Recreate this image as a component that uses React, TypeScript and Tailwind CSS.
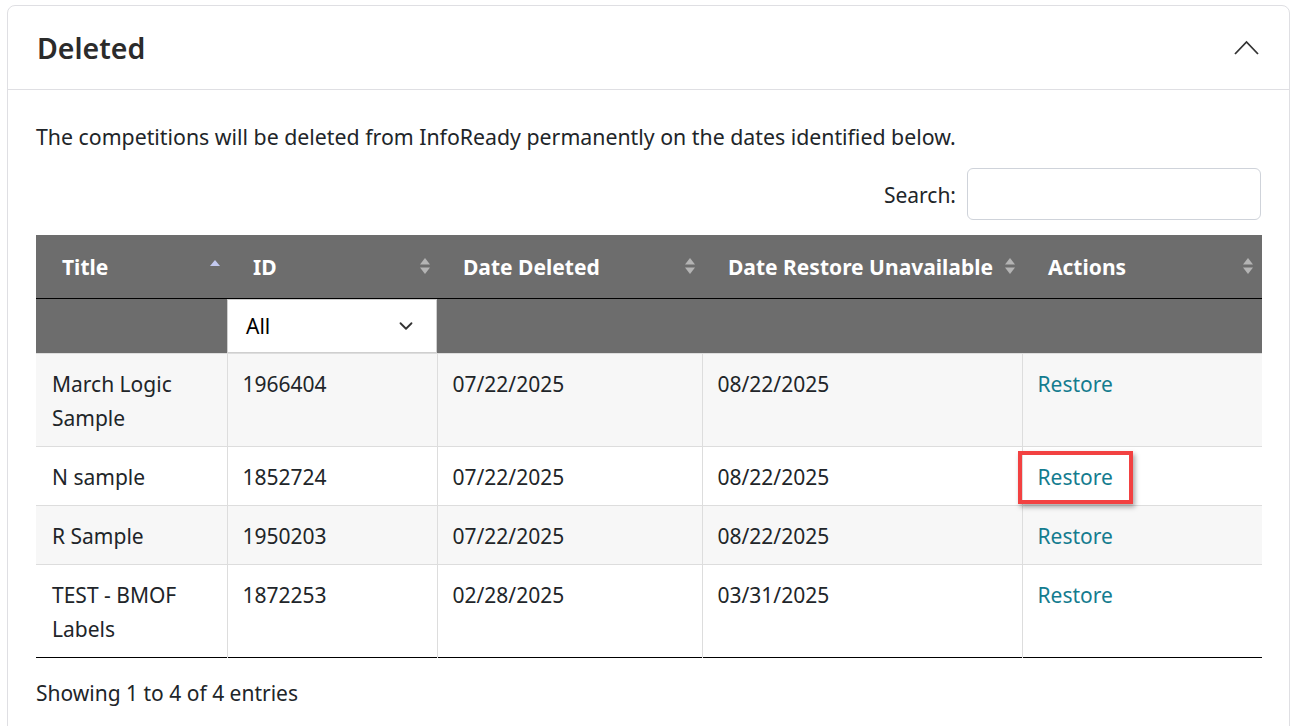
import { ChevronDown } from "lucide-react";

type Row = {
  title: string;
  id: string;
  deleted: string;
  unavailable: string;
};

const rows: Row[] = [
  { title: "March Logic Sample", id: "1966404", deleted: "07/22/2025", unavailable: "08/22/2025" },
  { title: "N sample", id: "1852724", deleted: "07/22/2025", unavailable: "08/22/2025" },
  { title: "R Sample", id: "1950203", deleted: "07/22/2025", unavailable: "08/22/2025" },
  { title: "TEST - BMOF Labels", id: "1872253", deleted: "02/28/2025", unavailable: "03/31/2025" },
];

function SortIcon({ active }: { active?: boolean }) {
  if (active) {
    return (
      <svg width="12" height="20" viewBox="0 0 12 20" className="shrink-0">
        <polygon points="6,4 11,10 1,10" fill="#c3c9ef" />
      </svg>
    );
  }
  return (
    <svg width="12" height="20" viewBox="0 0 12 20" className="shrink-0">
      <polygon points="6,2 11,8.5 1,8.5" fill="#b4b4b4" />
      <polygon points="6,18 11,11.5 1,11.5" fill="#b4b4b4" />
    </svg>
  );
}

function HeadCell({ label, active, last }: { label: string; active?: boolean; last?: boolean }) {
  return (
    <th className="h-[63px] p-0 text-left align-middle">
      <div className={`flex items-center justify-between pl-[26px] ${last ? "pr-[8px]" : "pr-[6px]"}`}>
        <span className="pt-[3px] font-bold text-white whitespace-nowrap">{label}</span>
        <SortIcon active={active} />
      </div>
    </th>
  );
}

export default function App() {
  return (
    <div
      className="min-h-screen bg-white pl-[7px] pr-[1px] pt-[5px] text-[#212529]"
      style={{ fontFamily: '"Noto Sans", "Open Sans", sans-serif' }}
    >
      <div className="rounded-[8px] border border-[#dfdfe3] bg-white">
        <div className="flex h-[84px] items-center justify-between border-b border-[#dfdfe3] pl-[29px] pr-[30px]">
          <h2 className="pt-[2px] text-[28.5px] font-semibold leading-none text-[#2b2b2b]">Deleted</h2>
          <svg width="25" height="15" viewBox="0 0 25 15" className="mb-[1px]">
            <polyline points="1,14 12.5,2 24,14" fill="none" stroke="#333" strokeWidth="1.8" />
          </svg>
        </div>

        <div className="px-[28px] pt-[32px]">
          <p className="text-[21.3px] leading-[30px]">
            The competitions will be deleted from InfoReady permanently on the dates identified below.
          </p>

          <div className="mt-[16px] flex items-center justify-end gap-[11px]">
            <label className="pt-[3px] text-[21px]">Search:</label>
            <input className="h-[52px] w-[294px] rounded-[6px] border border-[#cfd3da] bg-white outline-none" />
          </div>

          <table className="mt-[15px] w-[1226px] table-fixed border-collapse text-[21px]">
            <colgroup>
              <col className="w-[191px]" />
              <col className="w-[210px]" />
              <col className="w-[265px]" />
              <col className="w-[320px]" />
              <col className="w-[240px]" />
            </colgroup>
            <thead className="bg-[#6d6d6d]">
              <tr className="border-b border-black">
                <HeadCell label="Title" active />
                <HeadCell label="ID" />
                <HeadCell label="Date Deleted" />
                <HeadCell label="Date Restore Unavailable" />
                <HeadCell label="Actions" last />
              </tr>
              <tr>
                <th className="h-[54px] p-0" />
                <th className="h-[54px] p-0">
                  <div className="flex h-[54px] items-center justify-between border border-[#cfcfcf] bg-white pl-[18px] pr-[19px] font-normal text-black">
                    <span className="pt-[3px]">All</span>
                    <ChevronDown size={22} strokeWidth={2} className="text-[#333]" />
                  </div>
                </th>
                <th className="p-0" />
                <th className="p-0" />
                <th className="p-0" />
              </tr>
            </thead>
            <tbody className="border-b border-black">
              {rows.map((r, i) => (
                <tr
                  key={r.id}
                  className={`${i % 2 === 0 ? "bg-[#f7f7f7]" : "bg-white"} border-t border-[#dddddd] align-top leading-[34px]`}
                >
                  <td className="border-r border-[#dddddd] px-[16px] pt-[13px] pb-[11px]">{r.title}</td>
                  <td className="border-r border-[#dddddd] px-[15px] pt-[13px] pb-[11px]">{r.id}</td>
                  <td className="border-r border-[#dddddd] px-[15px] pt-[13px] pb-[11px]">{r.deleted}</td>
                  <td className="border-r border-[#dddddd] px-[15px] pt-[13px] pb-[11px]">{r.unavailable}</td>
                  <td className="px-[15px] pt-[13px] pb-[11px]">
                    <span className="relative inline-block text-[#147c8f]">
                      Restore
                      {i === 1 && (
                        <span className="absolute -left-[20px] -right-[20px] -top-[9px] -bottom-[10px] border-[4px] border-[#f24141] shadow-[2px_3px_5px_rgba(0,0,0,0.35)]" />
                      )}
                    </span>
                  </td>
                </tr>
              ))}
            </tbody>
          </table>

          <p className="pt-[20px] pb-[30px] text-[21px]">Showing 1 to 4 of 4 entries</p>
        </div>
      </div>
    </div>
  );
}
